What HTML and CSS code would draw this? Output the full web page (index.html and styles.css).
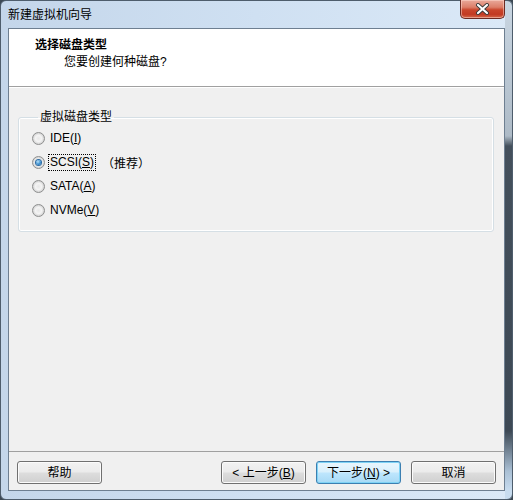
FILE: index.html
```html
<!DOCTYPE html>
<html>
<head>
<meta charset="utf-8">
<title>新建虚拟机向导</title>
<link rel="stylesheet" href="styles.css">
</head>
<body>
<div class="window">
  <div class="titlebar">
    <span class="title">新建虚拟机向导</span>
    <div class="close">
      <svg width="17" height="12" viewBox="0 0 17 12">
        <path d="M4 2 L13 10 M13 2 L4 10" stroke="#3a3a3a" stroke-width="4" stroke-linecap="round" fill="none"/>
        <path d="M4 2 L13 10 M13 2 L4 10" stroke="#ffffff" stroke-width="2.2" stroke-linecap="round" fill="none"/>
      </svg>
    </div>
  </div>
  <div class="client">
    <div class="header">
      <div class="h-title">选择磁盘类型</div>
      <div class="h-sub">您要创建何种磁盘?</div>
    </div>
    <div class="content">
      <fieldset class="group">
        <legend>虚拟磁盘类型</legend>
        <div class="opt"><span class="radio"></span><span class="lbl">IDE(<u>I</u>)</span></div>
        <div class="opt"><span class="radio checked"></span><span class="lbl focus">SCSI(<u>S</u>)</span><span class="rec">（推荐）</span></div>
        <div class="opt"><span class="radio"></span><span class="lbl">SATA(<u>A</u>)</span></div>
        <div class="opt"><span class="radio"></span><span class="lbl">NVMe(<u>V</u>)</span></div>
      </fieldset>
    </div>
    <div class="footer">
      <button class="btn">帮助</button>
      <div class="spacer"></div>
      <button class="btn">&lt; 上一步(<u>B</u>)</button>
      <button class="btn default">下一步(<u>N</u>) &gt;</button>
      <button class="btn">取消</button>
    </div>
  </div>
</div>
</body>
</html>
```
FILE: styles.css
```css
* { box-sizing: border-box; }
html, body { margin: 0; padding: 0; }
body {
  width: 513px;
  height: 500px;
  background: #3d4955;
  font-family: "Liberation Sans", "Noto Sans CJK SC", sans-serif;
  font-size: 12px;
  color: #000;
  overflow: hidden;
}
.window {
  width: 513px;
  height: 500px;
  border: 1px solid #4e5d6c;
  border-radius: 6px;
  padding: 0 7px 8px 7px;
  display: flex;
  flex-direction: column;
  background:
    linear-gradient(to bottom, #c9d6e2 0, #aebbc7 135px, #44505c 145px, #3d4955 430px, #a9bfd4 470px, #c8dcef 490px) right top / 7px 100% no-repeat,
    linear-gradient(to right, #c4d6ea 0, #cfe0f2 50%, #dbe9f7 100%);
}
.titlebar {
  height: 27px;
  display: flex;
  align-items: flex-start;
  flex-shrink: 0;
}
.title {
  margin-top: 7px;
  line-height: 14px;
  font-size: 12px;
  color: #000;
}
.close {
  margin-left: auto;
  width: 45px;
  height: 19px;
  margin-top: -1px;
  border: 1px solid #6b2a22;
  border-top: none;
  border-radius: 0 0 5px 5px;
  background: linear-gradient(to bottom, #e9a99a 0%, #dc7e69 40%, #c9452b 55%, #c23a22 80%, #d4684a 100%);
  box-shadow: inset 0 0 0 1px rgba(255,220,210,0.5);
  display: flex;
  align-items: center;
  justify-content: center;
}
.client {
  flex: 1;
  border: 1px solid #6e7f91;
  background: #f0f0f0;
  display: flex;
  flex-direction: column;
}
.header {
  height: 58px;
  background: #fff;
  border-bottom: 1px solid #a0a0a0;
  padding: 9px 0 0 26px;
  flex-shrink: 0;
}
.h-title {
  font-weight: bold;
  line-height: 14px;
}
.h-sub {
  line-height: 14px;
  margin-top: 3px;
  padding-left: 29px;
}
.content {
  flex: 1;
  border-top: 1px solid #fff;
  padding: 22px 10px 0 9px;
}
.group {
  margin: 0;
  padding: 2px 0 9px 13px;
  border: 1px solid #d5dfe5;
  border-radius: 3px;
  box-shadow: inset 0 0 0 1px #fff;
  min-width: 0;
}
.group legend {
  margin-left: 6px;
  padding: 0 2px;
  line-height: 14px;
}
.opt {
  height: 24px;
  display: flex;
  align-items: center;
}
.radio {
  width: 13px;
  height: 13px;
  border-radius: 50%;
  border: 1px solid #8e8f8f;
  background: radial-gradient(circle at 50% 50%, #e8e8e8 0, #f4f4f4 40%, #d0d0d0 75%, #f8f8f8 100%);
  margin-right: 3px;
  display: flex;
  align-items: center;
  justify-content: center;
  flex-shrink: 0;
}
.radio.checked::after {
  content: "";
  width: 5px;
  height: 5px;
  border-radius: 50%;
  background: radial-gradient(circle at 40% 35%, #b9e2f8 0, #3a8fd0 55%, #1b5d99 100%);
  box-shadow: 0 0 0 1px #2d6ba3;
}
.lbl {
  line-height: 15px;
  padding: 0 1px;
  border: 1px dotted transparent;
}
.lbl.focus {
  border-color: #000;
}
.rec {
  margin-left: 6px;
}
.footer {
  height: 39px;
  border-top: 1px solid #a0a0a0;
  padding: 9px 8px 0 8px;
  display: flex;
  align-items: flex-start;
  gap: 10px;
  flex-shrink: 0;
}
.spacer { flex: 1; }
.btn {
  width: 85px;
  height: 23px;
  padding: 0;
  font-family: "Liberation Sans", "Noto Sans CJK SC", sans-serif;
  font-size: 12px;
  color: #000;
  border: 1px solid #707070;
  border-radius: 3px;
  background: linear-gradient(to bottom, #f2f2f2 0%, #ebebeb 48%, #dddddd 52%, #cfcfcf 100%);
  box-shadow: inset 0 0 0 1px #fbfbfb;
  line-height: 20px;
}
.btn.default {
  border-color: #3c7fb1;
  box-shadow: inset 0 0 0 1px #7fd3f5;
  background: linear-gradient(to bottom, #eaf6fd 0%, #d9f0fc 48%, #bee6fd 52%, #a7d9f5 100%);
}
.btn u, .lbl u { text-decoration: underline; }
```
